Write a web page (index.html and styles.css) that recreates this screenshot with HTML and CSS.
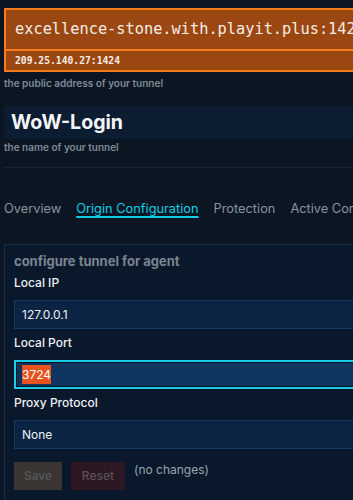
FILE: index.html
```html
<!DOCTYPE html>
<html>
<head>
<meta charset="utf-8">
<link rel="stylesheet" href="styles.css">
</head>
<body>
<div class="viewport">
  <div class="page">
    <div class="address-box">
      <div class="address-main">excellence-stone.with.playit.plus:1424</div>
      <div class="address-ip">209.25.140.27:1424</div>
    </div>
    <div class="hint hint-address">the public address of your tunnel</div>

    <div class="name-box">WoW-Login</div>
    <div class="hint hint-name">the name of your tunnel</div>

    <div class="divider"></div>

    <nav class="tabs">
      <span class="tab">Overview</span>
      <span class="tab active">Origin Configuration</span>
      <span class="tab">Protection</span>
      <span class="tab">Active Connections</span>
    </nav>

    <div class="card">
      <div class="card-title">configure tunnel for agent</div>
      <div class="field-label">Local IP</div>
      <div class="input">127.0.0.1</div>
      <div class="field-label">Local Port</div>
      <div class="input focused"><span class="selected">3724</span></div>
      <div class="field-label">Proxy Protocol</div>
      <div class="input">None</div>
      <div class="actions">
        <span class="btn btn-save">Save</span>
        <span class="btn btn-reset">Reset</span>
        <span class="status">(no changes)</span>
      </div>
    </div>
  </div>
</div>
</body>
</html>
```

FILE: styles.css
```css
html, body {
  margin: 0;
  padding: 0;
  background: #0b1622;
  overflow: hidden;
}
.viewport {
  width: 353px;
  height: 500px;
  overflow: hidden;
}
.page {
  width: 640px;
  padding: 8px 0 0 4px;
  font-family: Inter, "Noto Sans", sans-serif;
}
.address-box {
  border: 2px solid #f77a1c;
  background: #9a4712;
}
.address-main {
  font-family: "DejaVu Sans Mono", monospace;
  font-size: 15.3px;
  color: #f6eee6;
  height: 39px;
  line-height: 39px;
  padding-left: 9px;
  white-space: nowrap;
  border-bottom: 2px solid #f77a1c;
}
.address-ip {
  font-family: "DejaVu Sans Mono", monospace;
  font-weight: bold;
  font-size: 9.7px;
  color: #f6eee6;
  height: 19px;
  line-height: 19px;
  padding-left: 9px;
}
.hint {
  font-size: 10px;
  font-weight: 600;
  color: #7e8a98;
  white-space: nowrap;
}
.hint-address {
  margin-top: 4px;
  line-height: 14px;
}
.name-box {
  margin-top: 16px;
  background: #0c1c31;
  height: 33px;
  line-height: 33px;
  padding-left: 7px;
  font-size: 19.6px;
  font-weight: 700;
  color: #f3f5f8;
}
.hint-name {
  line-height: 14px;
  margin-top: 1px;
}
.divider {
  margin-top: 13px;
  height: 1px;
  background: #13233a;
}
.tabs {
  display: flex;
  gap: 15px;
  margin-top: 32px;
  white-space: nowrap;
}
.tab {
  font-size: 12.8px;
  color: #8893a0;
  line-height: 18px;
}
.tab.active {
  color: #13cde6;
  text-decoration: underline;
  text-underline-offset: 3px;
  text-decoration-thickness: 1.5px;
}
.card {
  margin-top: 26px;
  border: 1px solid #16304f;
  border-right: none;
  background: #0a182b;
  padding: 7px 0 12px 9px;
}
.card-title {
  font-size: 13px;
  font-weight: 700;
  color: #7b8491;
  line-height: 18px;
}
.field-label {
  font-size: 12px;
  font-weight: 500;
  color: #eef1f5;
  line-height: 16px;
  margin-top: 6px;
  margin-bottom: 9px;
}
.card-title + .field-label {
  margin-top: 5px;
}
.input {
  height: 27px;
  line-height: 27px;
  border: 1px solid #123963;
  background: #0c2444;
  padding-left: 7px;
  font-size: 12px;
  color: #eef1f5;
}
.input.focused {
  border: 2px solid #1ccbe8;
  box-shadow: inset 0 0 0 1px #07131f;
  background: #0e3460;
  height: 25px;
  line-height: 25px;
  padding-left: 6px;
}
.selected {
  background: #e5531f;
  color: #fff;
  padding: 2px 0;
}
.actions {
  display: flex;
  align-items: flex-start;
  margin-top: 13px;
  gap: 9px;
}
.btn {
  height: 28px;
  line-height: 28px;
  font-size: 12px;
  font-weight: 500;
  text-align: center;
}
.btn-save {
  width: 48px;
  background: #3a3530;
  color: #565a60;
}
.btn-reset {
  width: 54px;
  background: #2c1822;
  color: #5a4f58;
}
.status {
  font-size: 12px;
  color: #9aa4b0;
  line-height: 16px;
}
```
